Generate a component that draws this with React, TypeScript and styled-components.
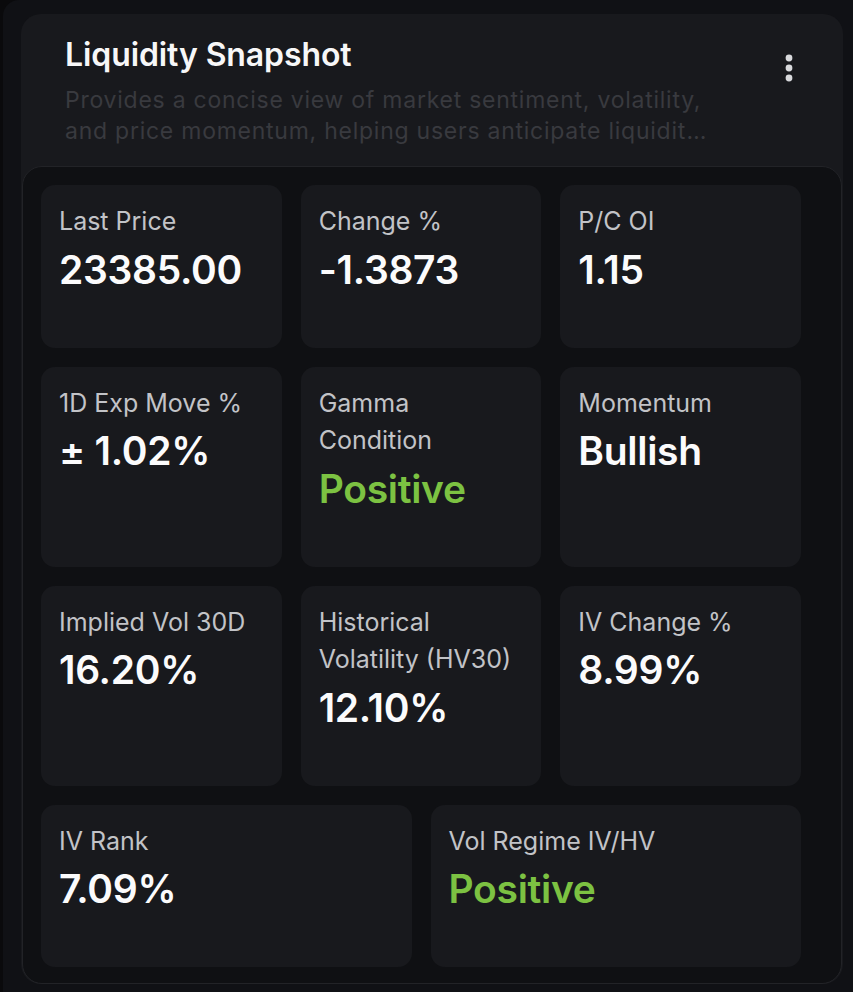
import React from "react";
import styled, { createGlobalStyle } from "styled-components";

const Global = createGlobalStyle`
  html, body { margin: 0; padding: 0; background: #0a0a0c; }
  body { font-family: Inter, "Noto Sans", "Liberation Sans", sans-serif; -webkit-font-smoothing: antialiased; }
  * { box-sizing: border-box; }
`;

const Frame = styled.div`
  margin-left: 3px;
  min-height: 992px;
  background: #101115;
  border-top-left-radius: 16px;
  padding: 14px 10px 8px 18px;
`;

const Card = styled.section`
  background: #18191d;
  border-radius: 20px;
  display: flex;
  flex-direction: column;
`;

const Header = styled.header`
  display: flex;
  justify-content: space-between;
  align-items: flex-start;
  padding: 22px 44px 0 44px;
`;

const HeaderText = styled.div`
  display: flex;
  flex-direction: column;
  gap: 11px;
`;

const Title = styled.h1`
  margin: 0;
  font-size: 32px;
  line-height: 38px;
  font-weight: 600;
  color: #f7f7f8;
  letter-spacing: -0.1px;
`;

const Description = styled.p`
  margin: 0;
  width: 654px;
  font-size: 23px;
  line-height: 31px;
  letter-spacing: 0.75px;
  color: #393a3f;
  display: -webkit-box;
  -webkit-line-clamp: 2;
  -webkit-box-orient: vertical;
  overflow: hidden;
`;

const MenuButton = styled.button`
  margin-top: 17px;
  width: 20px;
  height: 30px;
  padding: 0;
  border: 0;
  background: transparent;
  display: flex;
  align-items: center;
  justify-content: center;
  cursor: pointer;
`;

const Body = styled.div`
  margin: 19px 1px 0 1px;
  background: #0f1013;
  border: 1px solid #222327;
  border-radius: 20px;
  padding: 18px 40px 16px 18px;
  display: grid;
  grid-template-columns: repeat(6, 1fr);
  gap: 19px 19px;
`;

const Cell = styled.div<{ $span: number }>`
  grid-column: span ${(p) => p.$span};
  background: #18191d;
  border-radius: 14px;
  padding: 18px 18px 54px 18px;
  display: flex;
  flex-direction: column;
  gap: 5px;
`;

const Label = styled.div`
  font-size: 25px;
  line-height: 37.5px;
  color: #c2c3c7;
  font-weight: 400;
`;

const Value = styled.div<{ $positive?: boolean }>`
  font-size: 39px;
  line-height: 48px;
  font-weight: 600;
  color: ${(p) => (p.$positive ? "#7cc242" : "#fbfbfc")};
  letter-spacing: -0.3px;
`;

type Item = { label: React.ReactNode; value: string; positive?: boolean; span: number };

const items: Item[] = [
  { label: "Last Price", value: "23385.00", span: 2 },
  { label: "Change %", value: "-1.3873", span: 2 },
  { label: "P/C OI", value: "1.15", span: 2 },
  { label: "1D Exp Move %", value: "± 1.02%", span: 2 },
  { label: <>Gamma<br />Condition</>, value: "Positive", positive: true, span: 2 },
  { label: "Momentum", value: "Bullish", span: 2 },
  { label: "Implied Vol 30D", value: "16.20%", span: 2 },
  { label: <>Historical<br />Volatility (HV30)</>, value: "12.10%", span: 2 },
  { label: "IV Change %", value: "8.99%", span: 2 },
  { label: "IV Rank", value: "7.09%", span: 3 },
  { label: "Vol Regime IV/HV", value: "Positive", positive: true, span: 3 },
];

const Dots = () => (
  <svg width="10" height="30" viewBox="0 0 10 30" aria-hidden="true">
    <circle cx="5" cy="5" r="3.4" fill="#d8d9dc" />
    <circle cx="5" cy="15" r="3.4" fill="#d8d9dc" />
    <circle cx="5" cy="25" r="3.4" fill="#d8d9dc" />
  </svg>
);

export default function App() {
  return (
    <>
      <Global />
      <Frame>
        <Card>
          <Header>
            <HeaderText>
              <Title>Liquidity Snapshot</Title>
              <Description>
                Provides a concise view of market sentiment, volatility, and price momentum, helping users anticipate liquidity shifts and potential market moves.
              </Description>
            </HeaderText>
            <MenuButton aria-label="More options">
              <Dots />
            </MenuButton>
          </Header>
          <Body>
            {items.map((it, i) => (
              <Cell key={i} $span={it.span}>
                <Label>{it.label}</Label>
                <Value $positive={it.positive}>{it.value}</Value>
              </Cell>
            ))}
          </Body>
        </Card>
      </Frame>
    </>
  );
}
